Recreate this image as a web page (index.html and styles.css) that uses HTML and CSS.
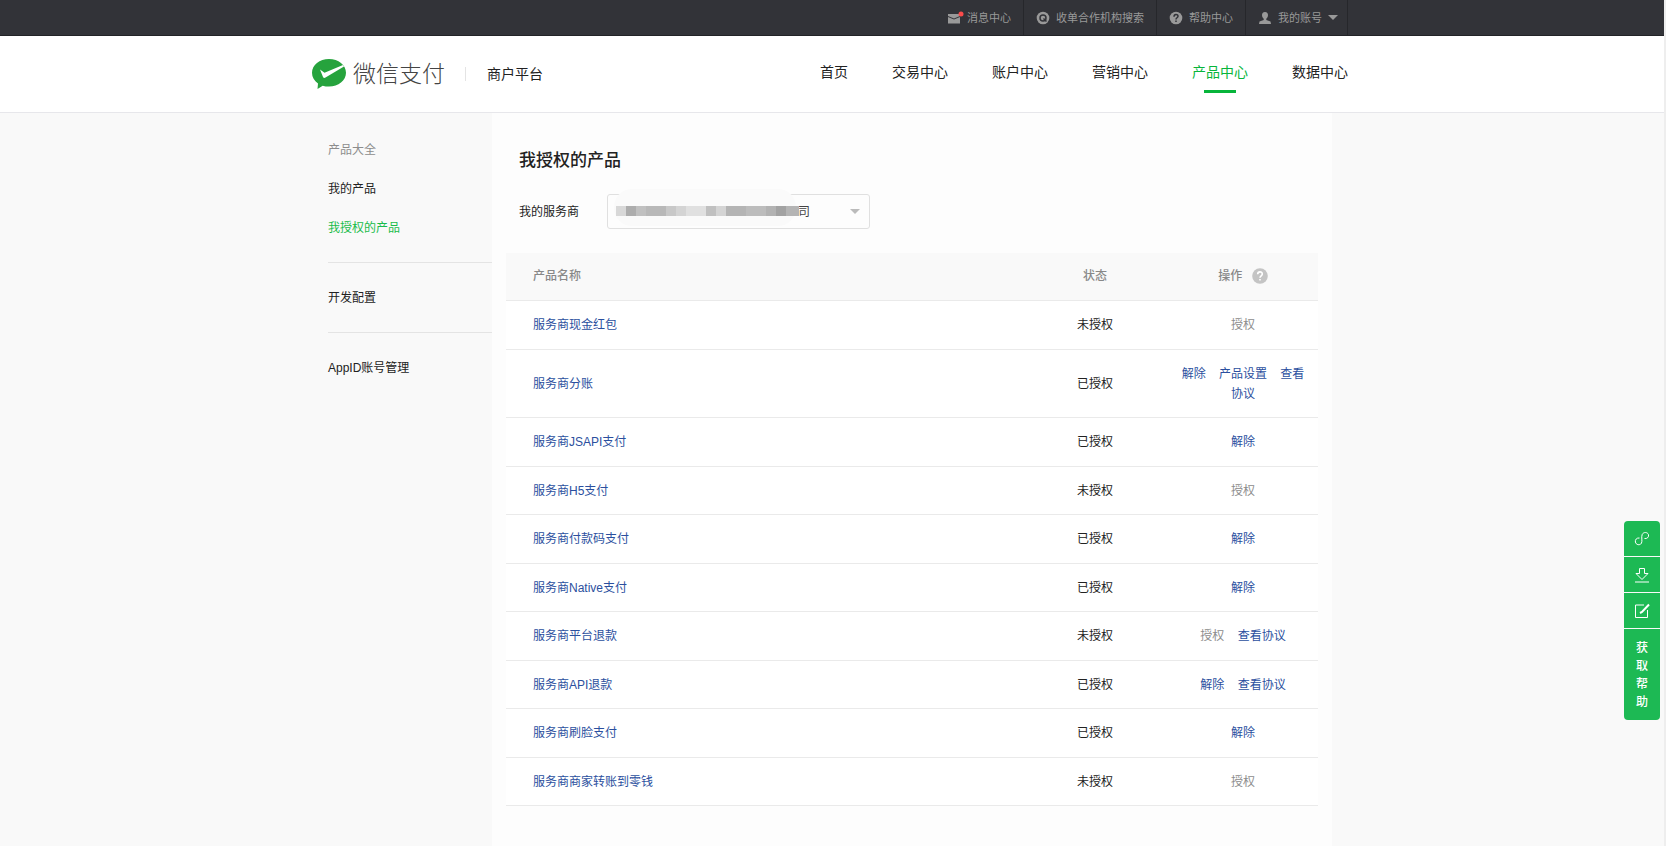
FILE: index.html
```html
<!DOCTYPE html>
<html lang="zh-CN">
<head>
  <meta charset="UTF-8">
  <meta name="viewport" content="width=device-width, initial-scale=1.0">
  <title>我授权的产品 - 微信支付商户平台</title>
  <link rel="stylesheet" href="styles.css">
</head>
<body>
  <div class="topbar">
    <div class="container">
      <a href="#" class="top-link">
        <svg width="17" height="14" viewBox="0 0 17 14"><path fill="#999" d="M1 3h12v2L7 7.500 1 5zM1 6l6 2.500L13 6v6.500H1z"/><circle cx="14" cy="3" r="2.500" fill="#fa4b4b"/></svg>
        <span>消息中心</span>
      </a>
      <a href="#" class="top-link">
        <svg width="14" height="14" viewBox="0 0 14 14"><circle cx="7" cy="7" r="6.300" fill="#999"/><circle cx="7" cy="7" r="3" fill="none" stroke="#323338" stroke-width="1.500"/><path stroke="#323338" stroke-width="1.500" d="M7.500 7.500l3 3"/></svg>
        <span>收单合作机构搜索</span>
      </a>
      <a href="#" class="top-link">
        <svg width="14" height="14" viewBox="0 0 14 14"><circle cx="7" cy="7" r="6.300" fill="#999"/><path fill="none" stroke="#323338" stroke-width="1.500" d="M5 5.700C5 2.700 9 2.900 9 5.300 9 6.800 7 6.700 7 8.500M7 9.500V11"/></svg>
        <span>帮助中心</span>
      </a>
      <a href="#" class="top-link">
        <svg width="14" height="14" viewBox="0 0 14 14"><path fill="#999" d="M7 1C4.800 1 4 2.500 4 4c0 1.800.8 3 1.700 3.700V9L1.500 10.500 1 13h12l-.5-2.500L8.300 9V7.700C9.200 7 10 5.800 10 4c0-1.500-.8-3-3-3z"/></svg>
        <span>我的账号</span>
        <i class="caret"></i>
      </a>
    </div>
  </div>

  <header class="header">
    <div class="container">
      <a href="#" class="logo">
        <svg width="34" height="30" viewBox="0 0 34 30"><path fill="#26a33d" d="M17 0C7.600 0 0 6 0 13.800c0 4.400 2.300 8.200 6 10.700L5.500 30l5.200-3.300c2 .6 4.100.9 6.300.9 9.400 0 17-6 17-13.800S26.400 0 17 0z"/><path fill="#fff" d="M8 10.500l4.500 3.300L31 6l1 1.500-18.500 11c-1.200.7-2 .5-2.600-.8z"/></svg>
        <span>微信支付</span>
      </a>
      <span class="platform">商户平台</span>
      <nav class="nav">
        <a href="#">首页</a>
        <a href="#">交易中心</a>
        <a href="#">账户中心</a>
        <a href="#">营销中心</a>
        <a href="#" class="active">产品中心</a>
        <a href="#">数据中心</a>
      </nav>
    </div>
  </header>

  <div class="container main">
    <aside class="sidebar">
      <div class="group">
        <a href="#" class="muted">产品大全</a>
        <a href="#">我的产品</a>
        <a href="#" class="active">我授权的产品</a>
      </div>
      <div class="group">
        <a href="#">开发配置</a>
      </div>
      <div class="group">
        <a href="#">AppID账号管理</a>
      </div>
    </aside>

    <main class="content">
      <h1>我授权的产品</h1>
      <div class="field">
        <label for="provider">我的服务商</label>
        <div class="select-wrap">
          <select id="provider">
            <option>司</option>
          </select>
          <span class="smudge"></span>
          <span class="mask"></span>
          <i class="caret"></i>
        </div>
      </div>

      <table class="products">
        <thead>
          <tr>
            <th class="name">产品名称</th>
            <th class="status">状态</th>
            <th class="action">操作
              <svg width="16" height="16" viewBox="0 0 16 16"><circle cx="8" cy="8" r="7.800" fill="#c4c4c4"/><path fill="none" stroke="#fff" stroke-width="1.600" d="M5.700 6.300C5.700 3 10.300 3.200 10.300 6 10.300 7.800 8 7.800 8 9.700M8 10.900v1.700"/></svg>
            </th>
          </tr>
        </thead>
        <tbody>
          <tr>
            <td class="name"><a href="#">服务商现金红包</a></td>
            <td>未授权</td>
            <td><a href="#" class="off">授权</a></td>
          </tr>
          <tr>
            <td class="name"><a href="#">服务商分账</a></td>
            <td>已授权</td>
            <td><a href="#">解除</a> <a href="#">产品设置</a> <a href="#">查看协议</a></td>
          </tr>
          <tr>
            <td class="name"><a href="#">服务商JSAPI支付</a></td>
            <td>已授权</td>
            <td><a href="#">解除</a></td>
          </tr>
          <tr>
            <td class="name"><a href="#">服务商H5支付</a></td>
            <td>未授权</td>
            <td><a href="#" class="off">授权</a></td>
          </tr>
          <tr>
            <td class="name"><a href="#">服务商付款码支付</a></td>
            <td>已授权</td>
            <td><a href="#">解除</a></td>
          </tr>
          <tr>
            <td class="name"><a href="#">服务商Native支付</a></td>
            <td>已授权</td>
            <td><a href="#">解除</a></td>
          </tr>
          <tr>
            <td class="name"><a href="#">服务商平台退款</a></td>
            <td>未授权</td>
            <td><a href="#" class="off">授权</a> <a href="#">查看协议</a></td>
          </tr>
          <tr>
            <td class="name"><a href="#">服务商API退款</a></td>
            <td>已授权</td>
            <td><a href="#">解除</a> <a href="#">查看协议</a></td>
          </tr>
          <tr>
            <td class="name"><a href="#">服务商刷脸支付</a></td>
            <td>已授权</td>
            <td><a href="#">解除</a></td>
          </tr>
          <tr>
            <td class="name"><a href="#">服务商商家转账到零钱</a></td>
            <td>未授权</td>
            <td><a href="#" class="off">授权</a></td>
          </tr>
        </tbody>
      </table>
    </main>
  </div>

  <div class="tools">
    <button type="button" aria-label="链接">
      <svg width="16" height="16" viewBox="0 0 16 16"><path d="M5.500 7C2.500 6.600 1 8.800 1.400 11c.5 2.800 4.300 3.800 6 1.300C8.700 10 7 6.300 8.200 3.500c1.200-2.700 5.400-2.600 6.300.2.600 2.200-1.300 4.300-4 3.800"/></svg>
    </button>
    <button type="button" aria-label="下载">
      <svg width="16" height="16" viewBox="0 0 16 16"><path d="M5.500 1.500h5v5H14L8 12.500 2 6.500h3.500zM1 15h14"/></svg>
    </button>
    <button type="button" aria-label="反馈">
      <svg width="16" height="16" viewBox="0 0 16 16"><path d="M10 2H1.500v12.500h12V7"/><path stroke-width="2" d="M15 1.500L8 9l-2 1"/></svg>
    </button>
    <button type="button" class="help">获取帮助</button>
  </div>
</body>
</html>
```

FILE: styles.css
```css
* {
  box-sizing: border-box;
}
body {
  margin: 0;
  padding-right: 4px;
  min-height: 100vh;
  display: flex;
  flex-direction: column;
  font-family: "Liberation Sans", "Noto Sans CJK SC", sans-serif;
  font-size: 12px;
  line-height: 20px;
  color: #222;
  background: #f9f9f9;
  border-right: 2px solid #eee;
}
a {
  color: inherit;
  text-decoration: none;
}
svg {
  flex: none;
}
.container {
  width: 100%;
  max-width: 1036px;
  margin: 0 auto;
}
.caret {
  border: 5px solid transparent;
  border-top-color: #bbb;
  border-bottom: 0;
}

/* top bar */
.topbar {
  margin-right: -4px;
  padding-right: 4px;
  background: #323338;
  border-bottom: 1px solid #222327;
}
.topbar .container {
  display: flex;
  justify-content: flex-end;
}
.top-link {
  display: flex;
  align-items: center;
  gap: 6px;
  height: 35px;
  padding: 0 12px;
  font-size: 11px;
  line-height: 16px;
  color: #999;
  border-right: 1px solid #26272b;
}
.top-link:first-child {
  gap: 3px;
}
.top-link:last-child {
  padding-right: 9px;
}
.top-link .caret {
  border-top-color: #999;
}

/* header */
.header {
  margin-right: -4px;
  padding-right: 4px;
  background: #fff;
  border-bottom: 1px solid #e7e7eb;
}
.header .container {
  display: flex;
  align-items: center;
  height: 76px;
}
.logo {
  display: flex;
  align-items: center;
  gap: 7px;
  font-size: 23px;
  font-weight: 300;
  color: #444;
}
.platform {
  margin-left: 20px;
  padding-left: 21px;
  font-size: 14px;
  line-height: 14px;
  border-left: 1px solid #e4e4e4;
}
.nav {
  display: flex;
  gap: 44px;
  margin-left: auto;
  font-size: 14px;
}
.nav a {
  display: flex;
  flex-direction: column;
  align-items: center;
  padding-top: 6px;
}
.nav a::after {
  content: "";
  width: 32px;
  height: 3px;
  margin: 8px -2px 0;
}
.nav .active {
  color: #07b53b;
}
.nav .active::after {
  background: #07b53b;
}

/* page */
.main {
  flex: 1;
  display: flex;
}
.sidebar {
  flex: none;
  width: 180px;
  padding: 8px 0 0 16px;
}
.group {
  padding: 16px 0 14px;
}
.group:first-child {
  padding-top: 10px;
}
.group + .group {
  border-top: 1px solid #e4e4e4;
}
.group a {
  display: block;
  padding: 9px 0 10px;
}
.group .muted {
  color: #8d8d8d;
}
.group .active {
  color: #1abc4b;
}
.content {
  flex: 1;
  max-width: 840px;
  padding: 37px 14px 40px;
  background: #fdfdfd;
}
.content h1 {
  margin: 0;
  padding-left: 13px;
  font-size: 17px;
  font-weight: 500;
  line-height: 22px;
}
.field {
  display: flex;
  align-items: center;
  gap: 28px;
  margin: 22px 0 24px;
  padding-left: 13px;
}
.select-wrap {
  position: relative;
  width: 263px;
}
.select-wrap select {
  width: 100%;
  height: 35px;
  padding: 0 30px 0 190px;
  font: inherit;
  color: #444;
  background: #fdfdfd;
  border: 1px solid #e0e0e0;
  border-radius: 3px;
  appearance: none;
}
.select-wrap .caret {
  position: absolute;
  top: 15px;
  right: 10px;
  pointer-events: none;
}
.smudge {
  position: absolute;
  top: -5px;
  left: 7px;
  width: 182px;
  height: 37px;
  background: #fafafa;
  border-radius: 18px;
  pointer-events: none;
}
.mask {
  position: absolute;
  top: 12px;
  left: 9px;
  width: 183px;
  height: 10px;
  background: linear-gradient(90deg, #d8d8d8 0 10px, #adadad 10px 20px, #c0c0c0 20px 30px, #b8b8b8 30px 50px, #c8c8c8 50px 60px, #d4d4d4 60px 70px, #e0e0e0 70px 90px, #c0c0c0 90px 100px, #d4d4d4 100px 110px, #b4b4b4 110px 130px, #bcbcbc 130px 150px, #b2b2b2 150px 160px, #a2a2a2 160px 170px, #b4b4b4 170px 183px);
  pointer-events: none;
}

/* table */
.products {
  width: 100%;
  border-collapse: collapse;
  table-layout: fixed;
  background: #fff;
}
.products th {
  height: 47px;
  padding: 0;
  font-weight: 500;
  color: #888;
  background: #f9f9f9;
  border-bottom: 1px solid #eaeaea;
}
.products td {
  padding: 14px 10px;
  text-align: center;
  border-bottom: 1px solid #eaeaea;
}
.products tr:nth-child(even) td {
  padding-bottom: 13px;
}
.products .name {
  padding-left: 27px;
  text-align: left;
}
.products .status {
  width: 146px;
}
.products .action {
  width: 150px;
}
.products .action svg {
  margin-left: 6px;
  vertical-align: -4px;
}
.products a {
  color: #2b4f9e;
}
.products a + a {
  margin-left: 10px;
}
.products .off {
  color: #8d8d8d;
}

/* floating tools */
.tools {
  position: fixed;
  right: 6px;
  bottom: 126px;
  display: flex;
  flex-direction: column;
  gap: 1px;
  width: 36px;
  border-radius: 4px;
  overflow: hidden;
}
.tools button {
  display: flex;
  align-items: center;
  justify-content: center;
  height: 35px;
  padding: 0;
  color: #fff;
  background: #1db954;
  border: 0;
  cursor: pointer;
}
.tools svg {
  fill: none;
  stroke: #fff;
}
.tools .help {
  height: 91px;
  padding: 0 12px;
  font: inherit;
  font-weight: 500;
  line-height: 18px;
}
```
